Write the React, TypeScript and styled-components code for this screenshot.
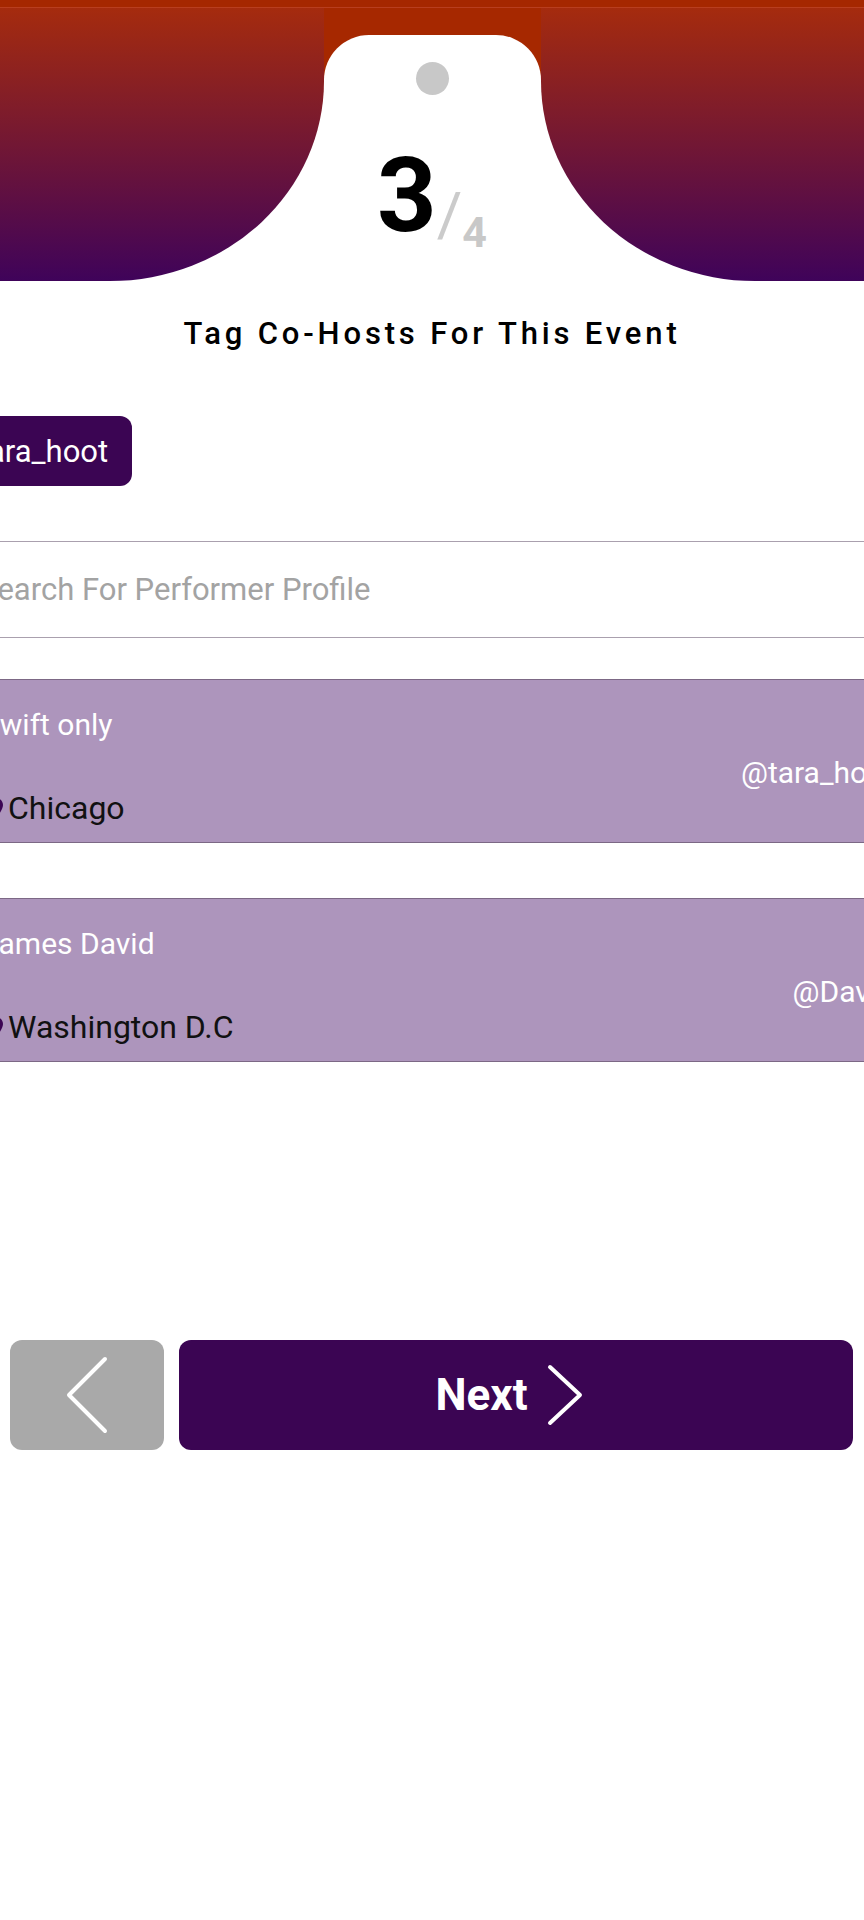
import React from 'react';
import styled, { createGlobalStyle } from 'styled-components';

type Performer = {
  name: string;
  city: string;
  handle: string;
};

const performers: Performer[] = [
  { name: 'Swift only', city: 'Chicago', handle: '@tara_hoot' },
  { name: 'James David', city: 'Washington D.C', handle: '@David' },
];

const GlobalStyle = createGlobalStyle`
  * { box-sizing: border-box; }
  html, body {
    margin: 0;
    padding: 0;
    background: #fff;
    overflow-x: hidden;
  }
  body {
    font-family: Roboto, "Liberation Sans", Arial, sans-serif;
  }
`;

const PinIcon = () => (
  <svg width="24" height="24" viewBox="0 0 24 24" fill="#3b0553">
    <path d="M12 2C8.13 2 5 5.13 5 9c0 5.25 7 13 7 13s7-7.75 7-13c0-3.87-3.13-7-7-7zm0 9.5c-1.38 0-2.5-1.12-2.5-2.5s1.12-2.5 2.5-2.5 2.5 1.12 2.5 2.5-1.12 2.5-2.5 2.5z" />
  </svg>
);

const App = () => {
  return (
    <Page>
      <GlobalStyle />
      <Header>
        <StatusStrip />
        <HeaderRow>
          <Wing side="left" />
          <Notch>
            <Tab>
              <StepDot />
              <Fraction>
                <Current>3</Current>
                <Slash>/</Slash>
                <Total>4</Total>
              </Fraction>
            </Tab>
          </Notch>
          <Wing side="right" />
        </HeaderRow>
      </Header>

      <Title>Tag Co-Hosts For This Event</Title>

      <Content>
        <ChipRow>
          <Chip>@tara_hoot</Chip>
        </ChipRow>

        <SearchBox>
          <SearchInput placeholder="Search For Performer Profile" />
        </SearchBox>

        <CardList>
          {performers.map((p) => (
            <Card key={p.handle}>
              <CardInfo>
                <Name>{p.name}</Name>
                <Location>
                  <PinIcon />
                  <span>{p.city}</span>
                </Location>
              </CardInfo>
              <Handle>{p.handle}</Handle>
            </Card>
          ))}
        </CardList>
      </Content>

      <Footer>
        <BackButton aria-label="Back">
          <svg width="44" height="78" viewBox="0 0 44 78" fill="none">
            <polyline points="40,3 4,39 40,75" stroke="#fff" strokeWidth="4" strokeLinecap="round" strokeLinejoin="round" />
          </svg>
        </BackButton>
        <NextButton>
          <span>Next</span>
          <svg width="36" height="62" viewBox="0 0 36 62" fill="none">
            <polyline points="3,3 33,31 3,59" stroke="#fff" strokeWidth="4" strokeLinecap="round" strokeLinejoin="round" />
          </svg>
        </NextButton>
      </Footer>
    </Page>
  );
};

const Page = styled.div`
  width: 100%;
  min-height: 1920px;
  background: #fff;
  overflow: hidden;
`;

const Header = styled.header`
  display: flex;
  flex-direction: column;
`;

const StatusStrip = styled.div`
  height: 8px;
  background: #a52700;
  border-bottom: 1px solid #b83e1f;
`;

const HeaderRow = styled.div`
  display: flex;
  height: 273px;
  background: #fff;
`;

const Wing = styled.div<{ side: 'left' | 'right' }>`
  flex: 1;
  background: linear-gradient(180deg, #a52b0e 0%, #3f035a 100%);
  ${({ side }) =>
    side === 'left'
      ? 'border-bottom-right-radius: 214px 200px;'
      : 'border-bottom-left-radius: 214px 200px;'}
`;

const Notch = styled.div`
  width: 217px;
  background: #a62800;
  display: flex;
  flex-direction: column;
`;

const Tab = styled.div`
  flex: 1;
  margin-top: 27px;
  background: #fff;
  border-radius: 45px 45px 0 0;
  display: flex;
  flex-direction: column;
  align-items: center;
`;

const StepDot = styled.div`
  width: 33px;
  height: 33px;
  margin-top: 27px;
  border-radius: 50%;
  background: #c8c8c8;
`;

const Fraction = styled.div`
  margin-top: 49px;
  height: 104px;
  line-height: 104px;
  white-space: nowrap;
`;

const Current = styled.span`
  font-size: 104px;
  font-weight: 700;
  color: #000;
`;

const Slash = styled.span`
  font-size: 62px;
  font-weight: 400;
  line-height: 1;
  color: #cbcbcb;
  vertical-align: -5px;
`;

const Total = styled.span`
  font-size: 43px;
  font-weight: 700;
  line-height: 1;
  color: #c8c8c8;
  vertical-align: -16px;
`;

const Title = styled.h1`
  margin: 33px 0 0;
  font-size: 31px;
  font-weight: 500;
  line-height: 40px;
  letter-spacing: 3.85px;
  text-align: center;
  color: #000;
`;

const Content = styled.main`
  margin: 0 -40px;
  display: flex;
  flex-direction: column;
`;

const ChipRow = styled.div`
  display: flex;
  margin-top: 62px;
`;

const Chip = styled.div`
  display: inline-flex;
  align-items: center;
  height: 70px;
  margin-left: -34px;
  padding: 0 24px;
  border-radius: 12px;
  background: #3b0553;
  color: #fff;
  font-size: 31px;
  white-space: nowrap;
`;

const SearchBox = styled.div`
  margin-top: 55px;
  border-top: 1px solid #aaa0ae;
  border-bottom: 1px solid #aaa0ae;
`;

const SearchInput = styled.input`
  display: block;
  width: 100%;
  height: 95px;
  padding: 0 0 0 19px;
  border: none;
  outline: none;
  background: transparent;
  font-family: Roboto, "Liberation Sans", Arial, sans-serif;
  font-size: 31px;
  color: #222;

  &::placeholder {
    color: #a3a3a3;
  }
`;

const CardList = styled.div`
  margin-top: 41px;
  display: flex;
  flex-direction: column;
  gap: 55px;
`;

const Card = styled.div`
  height: 164px;
  display: flex;
  align-items: center;
  justify-content: space-between;
  padding: 27px 10px 16px 22px;
  background: #ad95bc;
  border-top: 1px solid #7c6885;
  border-bottom: 1px solid #7c6885;
  font-size: 30px;
`;

const CardInfo = styled.div`
  height: 100%;
  display: flex;
  flex-direction: column;
  justify-content: space-between;
`;

const Name = styled.div`
  line-height: 36px;
  color: #fff;
`;

const Location = styled.div`
  display: flex;
  align-items: center;
  line-height: 36px;
  font-size: 32px;
  color: #111;

  svg {
    margin-left: 2px;
    flex-shrink: 0;
  }
`;

const Handle = styled.div`
  margin-top: 12px;
  line-height: 36px;
  color: #fff;
  white-space: nowrap;
`;

const Footer = styled.footer`
  display: flex;
  gap: 15px;
  margin-top: 278px;
  padding: 0 11px 0 10px;
`;

const BackButton = styled.button`
  width: 154px;
  height: 110px;
  flex-shrink: 0;
  display: flex;
  align-items: center;
  justify-content: center;
  border: none;
  border-radius: 12px;
  background: #a9a9a9;
  padding: 0;
`;

const NextButton = styled.button`
  flex: 1;
  height: 110px;
  display: flex;
  align-items: center;
  justify-content: center;
  gap: 19px;
  padding: 0 14px 0 0;
  border: none;
  border-radius: 12px;
  background: #3b0553;
  color: #fff;
  font-family: Roboto, "Liberation Sans", Arial, sans-serif;
  font-size: 44px;
  font-weight: 700;
`;

export default App;
